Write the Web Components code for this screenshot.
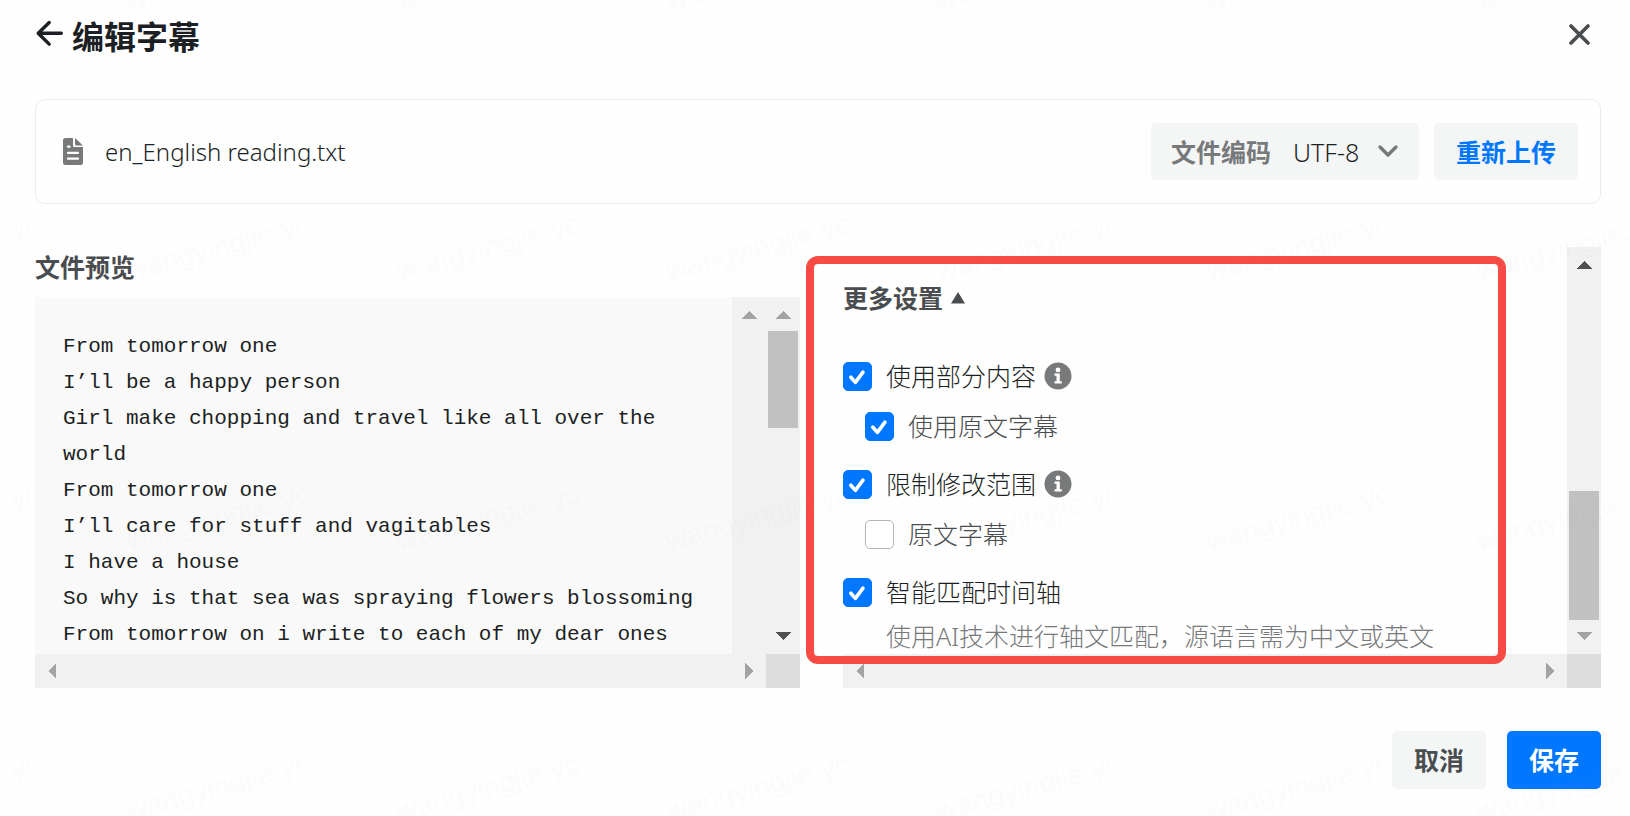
<!DOCTYPE html>
<html lang="zh-CN">
<head>
<meta charset="utf-8">
<meta name="viewport" content="width=device-width, initial-scale=1">
<title>编辑字幕</title>
<style>
    body {
        margin: 0;
        background: #fefefe;
        color: #1c1f23;
        font-family: "Noto Sans", "Noto Sans CJK SC", sans-serif;
        font-size: 25px;
        line-height: 36px;
    }
    .columns {
        display: grid;
        grid-template-columns: minmax(0, 765fr) minmax(0, 758fr);
        gap: 43px;
        min-height: 0;
    }
    .preview { display: flex; flex-direction: column; gap: 12px; padding-top: 2px; min-height: 0; }
    .preview h2 { margin: 0; font-size: 25px; line-height: 36px; color: #4a4d50; }
    .preview scroll-pane { flex: 1; min-height: 0; }
    .text { display: flex; height: 100%; background: #f9f9f9; }
    .text pre {
        flex: 1;
        margin: 0;
        padding: 32px 28px;
        font: 21px/36px "Liberation Mono", "Noto Sans CJK SC", monospace;
        white-space: pre-wrap;
    }
    .settings { position: relative; display: grid; min-height: 0; }
</style>
</head>
<body>
<editor-page>
    <editor-header slot="header">编辑字幕</editor-header>
    <file-bar slot="file" encoding="UTF-8">en_English reading.txt</file-bar>
    <div class="columns">
        <section class="preview">
            <h2>文件预览</h2>
            <scroll-pane thumb="97" up="off" down="on">
                <div class="text">
                    <pre>From tomorrow one
I’ll be a happy person
Girl make chopping and travel like all over the world
From tomorrow one
I’ll care for stuff and vagitables
I have a house
So why is that sea was spraying flowers blossoming
From tomorrow on i write to each of my dear ones</pre>
                    <scroll-track up="off" down="none"></scroll-track>
                </div>
            </scroll-pane>
        </section>
        <section class="settings">
            <scroll-pane thumb="129" at="end" up="on" down="off">
                <more-settings heading="更多设置">
                    <check-option label="使用部分内容" checked info></check-option>
                    <check-option label="使用原文字幕" checked sub></check-option>
                    <check-option label="限制修改范围" checked info></check-option>
                    <check-option label="原文字幕" sub></check-option>
                    <check-option label="智能匹配时间轴" checked>使用AI技术进行轴文匹配，源语言需为中文或英文</check-option>
                </more-settings>
            </scroll-pane>
            <highlight-frame></highlight-frame>
        </section>
    </div>
    <editor-footer slot="footer"></editor-footer>
</editor-page>
<water-mark text="wangyingjie.yc"></water-mark>

<script>
class EditorPage extends HTMLElement {
    constructor() {
        super();
        this.attachShadow({ mode: 'open' }).innerHTML = `
        <style>
            :host {
                display: grid;
                grid-template-rows: auto auto minmax(0, 1fr) auto;
                box-sizing: border-box;
                height: 100vh;
                padding: 13px 29px 27px 35px;
            }
            .file { margin: 38px 0 43px; }
            .main { display: grid; min-height: 0; }
            .footer { margin-top: 43px; }
        </style>
        <slot name="header"></slot>
        <div class="file"><slot name="file"></slot></div>
        <main class="main"><slot></slot></main>
        <div class="footer"><slot name="footer"></slot></div>
        `;
    }
}

class EditorHeader extends HTMLElement {
    constructor() {
        super();
        this.attachShadow({ mode: 'open' }).innerHTML = `
        <style>
            :host { display: flex; align-items: center; height: 48px; }
            button { border: 0; padding: 0; background: none; display: block; cursor: pointer; }
            svg { display: block; }
            h1 { flex: 1; margin: 0 0 0 8px; font-size: 32px; line-height: 48px; }
            .back { height: 34px; margin-bottom: 8px; }
            .close { margin-right: 8px; }
        </style>
        <button class="back" aria-label="返回">
            <svg width="29" height="34" viewBox="0 0 29 34" fill="none" stroke="#1c1f23" stroke-width="3.4" stroke-linecap="round" stroke-linejoin="round">
                <path d="M14.2 6.5 3.2 17.3l11 10.8M3.5 17.3h22.8"/>
            </svg>
        </button>
        <h1><slot></slot></h1>
        <button class="close" aria-label="关闭">
            <svg width="26" height="26" viewBox="0 0 26 26" fill="none" stroke="#4a4d50" stroke-width="3.6" stroke-linecap="round">
                <path d="M4 2l17 17M21 2l-17 17"/>
            </svg>
        </button>
        `;
    }
}

class FileBar extends HTMLElement {
    connectedCallback() {
        const encoding = this.getAttribute('encoding') || 'UTF-8';
        this.attachShadow({ mode: 'open' }).innerHTML = `
        <style>
            :host {
                display: flex;
                align-items: center;
                border: 1px solid #ebecec;
                border-radius: 10px;
                padding: 23px 22px 23px 27px;
            }
            svg { display: block; flex: none; }
            .name { flex: 1; margin-left: 22px; font-size: 24px; font-weight: 300; }
            .encoding {
                display: flex;
                align-items: center;
                height: 57px;
                padding: 0 20px;
                border-radius: 5px;
                background: #f4f6f6;
            }
            label { margin-right: 22px; font-weight: bold; color: #77797b; }
            select {
                appearance: none;
                border: 0;
                padding: 0;
                background: none;
                color: inherit;
                font: inherit;
                font-weight: 300;
                width: 84px;
            }
            button {
                height: 57px;
                margin-left: 15px;
                padding: 0 22px;
                border: 0;
                border-radius: 5px;
                background: #f4f6f6;
                color: #0077ff;
                font: inherit;
                font-weight: bold;
            }
        </style>
        <svg width="20" height="28" viewBox="0 0 20 28">
            <path fill="#77797b" d="M2.5 0H10v7.5a1.5 1.5 0 0 0 1.5 1.5H20v15.5a2.5 2.5 0 0 1-2.5 2.5h-15A2.5 2.5 0 0 1 0 24.5v-22A2.5 2.5 0 0 1 2.5 0z"/>
            <path fill="#77797b" d="M12 0l8 7.5h-6.5A1.5 1.5 0 0 1 12 6z"/>
            <path stroke="#fff" stroke-width="2.2" stroke-linecap="round" d="M5 8.700h1.500M5 14.800h10M5 20.700h10"/>
        </svg>
        <span class="name"><slot></slot></span>
        <div class="encoding">
            <label for="encoding">文件编码</label>
            <select id="encoding"><option>${encoding}</option></select>
            <svg width="22" height="22" viewBox="0 0 22 22" fill="none" stroke="#77797b" stroke-width="3.4" stroke-linecap="round" stroke-linejoin="round">
                <path d="M3 6l8 8 8-8"/>
            </svg>
        </div>
        <button>重新上传</button>
        `;
    }
}

// One scrollbar: arrow, track with thumb, arrow. Arrows are on, off or none.
class ScrollTrack extends HTMLElement {
    connectedCallback() {
        const across = this.hasAttribute('horizontal');
        const thumb = this.getAttribute('thumb') || 0;
        const arrow = (state, path) => state === 'none' ? '' : `
            <svg width="34" height="34" viewBox="0 0 34 34" shape-rendering="crispEdges">
                <path fill="${state === 'on' ? '#505050' : '#a3a3a3'}" d="${path}"/>
            </svg>`;
        this.attachShadow({ mode: 'open' }).innerHTML = `
        <style>
            :host {
                display: flex;
                flex-direction: ${across ? 'row' : 'column'};
                background: #f1f1f1;
                min-width: 34px;
                min-height: 34px;
            }
            svg { display: block; flex: none; }
            .track {
                flex: 1;
                display: flex;
                flex-direction: column;
                justify-content: ${this.getAttribute('at') === 'end' ? 'flex-end' : 'flex-start'};
                padding: 0 2px;
            }
            .thumb { height: ${thumb}px; background: #c1c1c1; }
        </style>
        ${arrow(this.getAttribute('up'), across ? 'M21 9v16l-8-8z' : 'M9 22h16l-8-8z')}
        <div class="track"><div class="thumb"></div></div>
        ${arrow(this.getAttribute('down'), across ? 'M13 9v16l8-8z' : 'M9 12h16l-8 8z')}
        `;
    }
}

class ScrollPane extends HTMLElement {
    connectedCallback() {
        const get = name => this.getAttribute(name) || '';
        this.attachShadow({ mode: 'open' }).innerHTML = `
        <style>
            :host {
                display: grid;
                grid-template-columns: minmax(0, 1fr) 34px;
                grid-template-rows: minmax(0, 1fr) 34px;
                min-height: 0;
            }
            .view { overflow: hidden; }
            .corner { background: #dcdcdc; }
        </style>
        <div class="view"><slot></slot></div>
        <scroll-track thumb="${get('thumb')}" at="${get('at')}" up="${get('up')}" down="${get('down')}"></scroll-track>
        <scroll-track horizontal up="off" down="off"></scroll-track>
        <div class="corner"></div>
        `;
    }
}

class MoreSettings extends HTMLElement {
    connectedCallback() {
        this.attachShadow({ mode: 'open' }).innerHTML = `
        <style>
            :host { display: block; padding-top: 33px; }
            button {
                display: flex;
                align-items: center;
                gap: 8px;
                margin-bottom: 20px;
                border: 0;
                padding: 0;
                background: none;
                color: #4a4d50;
                font: inherit;
                font-weight: bold;
            }
            .options { display: flow-root; }
        </style>
        <button aria-expanded="true">${this.getAttribute('heading')}
            <svg width="14" height="12" viewBox="0 0 14 12"><path fill="#4a4d50" d="M7 0l7 11.5H0z"/></svg>
        </button>
        <div class="options"><slot></slot></div>
        `;
    }
}

class CheckOption extends HTMLElement {
    connectedCallback() {
        const info = this.hasAttribute('info') ? `
            <button aria-label="说明">
                <svg width="28" height="28" viewBox="0 0 28 28">
                    <circle cx="14" cy="14" r="13.5" fill="#77797b"/>
                    <circle cx="14" cy="7.9" r="2.4" fill="#fff"/>
                    <path fill="#fff" d="M10.5 11.5h5.3v7.7h2v2.2h-7.3v-2.2h2v-5.500h-2z"/>
                </svg>
            </button>` : '';
        const note = this.textContent.trim() ? '<div class="note"><slot></slot></div>' : '';
        this.attachShadow({ mode: 'open' }).innerHTML = `
        <style>
            :host { display: block; margin-top: 22px; font-weight: 300; }
            :host([sub]) { margin: 14px 0 0 22px; color: #4a4d50; }
            .row { display: flex; align-items: center; height: 36px; }
            .box { display: grid; width: 29px; height: 29px; }
            .box > * { grid-area: 1 / 1; }
            input {
                appearance: none;
                box-sizing: border-box;
                width: 29px;
                height: 29px;
                margin: 0;
                border: 1px solid #b4b6b7;
                border-radius: 5px;
                background: #fff;
            }
            input:checked { border-color: #0077ff; background: #0077ff; }
            svg { display: block; }
            .tick { display: none; pointer-events: none; }
            input:checked + .tick { display: block; }
            label { margin: 0 8px 0 14px; }
            button { border: 0; padding: 0; background: none; }
            .note { margin: 8px 0 0 43px; white-space: nowrap; color: #77797b; }
        </style>
        <div class="row">
            <span class="box">
                <input type="checkbox" id="check" ${this.hasAttribute('checked') ? 'checked' : ''}>
                <svg class="tick" width="29" height="29" viewBox="0 0 29 29" fill="none" stroke="#fff" stroke-width="3.6" stroke-linecap="round" stroke-linejoin="round">
                    <path d="M7.8 15.2l4.6 5.200 7.6-10.3"/>
                </svg>
            </span>
            <label for="check">${this.getAttribute('label')}</label>
            ${info}
        </div>
        ${note}
        `;
    }
}

// Red frame that lies over the settings pane and its scrollbar
class HighlightFrame extends HTMLElement {
    constructor() {
        super();
        this.attachShadow({ mode: 'open' }).innerHTML = `
        <style>
            :host {
                position: absolute;
                inset: 9px 95px 24px -37px;
                border: 8px solid #f74a45;
                border-radius: 12px;
                pointer-events: none;
            }
        </style>
        `;
    }
}

class EditorFooter extends HTMLElement {
    constructor() {
        super();
        this.attachShadow({ mode: 'open' }).innerHTML = `
        <style>
            :host { display: flex; justify-content: flex-end; gap: 21px; }
            button {
                height: 58px;
                padding: 0 22px;
                border: 0;
                border-radius: 5px;
                background: #f4f6f6;
                color: #4a4d50;
                font: inherit;
                font-weight: bold;
            }
            .save { background: #0077ff; color: #fff; }
        </style>
        <button>取消</button>
        <button class="save">保存</button>
        `;
    }
}

class WaterMark extends HTMLElement {
    connectedCallback() {
        this.attachShadow({ mode: 'open' }).innerHTML = `
        <style>
            :host { position: fixed; inset: 0; pointer-events: none; }
            svg { display: block; width: 100%; height: 100%; }
            text { font: 29px "Liberation Sans", sans-serif; fill: #a0a0a0; fill-opacity: 0.03; }
        </style>
        <svg aria-hidden="true">
            <pattern id="mark" x="120" y="100" width="270" height="270" patternUnits="userSpaceOnUse">
                <text transform="translate(9 181) rotate(-15)">${this.getAttribute('text')}</text>
            </pattern>
            <rect width="100%" height="100%" fill="url(#mark)"/>
        </svg>
        `;
    }
}

customElements.define('editor-page', EditorPage);
customElements.define('editor-header', EditorHeader);
customElements.define('file-bar', FileBar);
customElements.define('scroll-track', ScrollTrack);
customElements.define('scroll-pane', ScrollPane);
customElements.define('more-settings', MoreSettings);
customElements.define('check-option', CheckOption);
customElements.define('highlight-frame', HighlightFrame);
customElements.define('editor-footer', EditorFooter);
customElements.define('water-mark', WaterMark);
</script>
</body>
</html>
